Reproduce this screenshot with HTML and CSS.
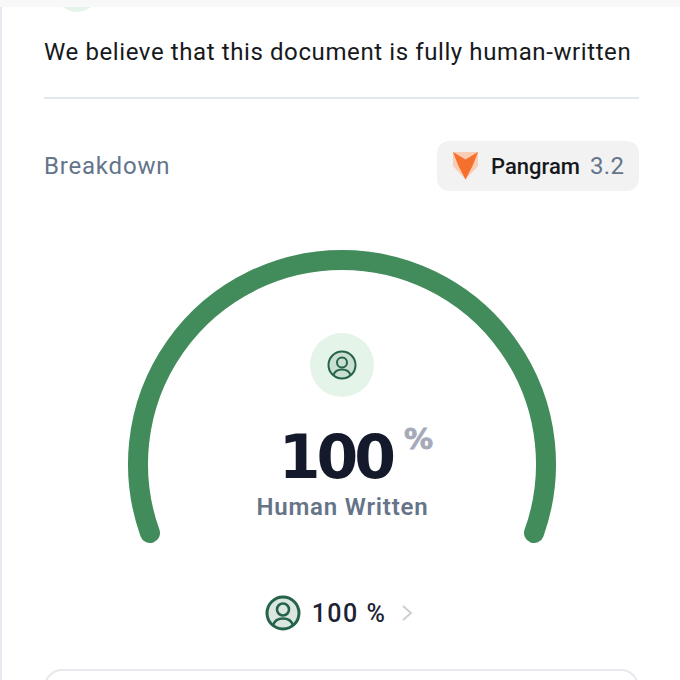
FILE: index.html
```html
<!DOCTYPE html>
<html lang="en">
<head>
    <meta charset="UTF-8">
    <title>Breakdown</title>
    <link rel="stylesheet" href="styles.css">
</head>
<body>
    <div class="topbar"></div>

    <main class="card">
        <div class="peek"><div class="peek-circle"></div></div>

        <p class="verdict">We believe that this document is fully human-written</p>

        <div class="breakdown-head">
            <h2>Breakdown</h2>
            <div class="model-chip">
                <svg class="fox" viewBox="0 0 25 28" width="25" height="28">
                    <path d="M0 0 L0 14 L12.5 27.5 L25 14 L25 0 Z" fill="#f9cdb6"/>
                    <path d="M0 0 L12.5 7.5 L25 0 L19.5 14 L12.5 27.5 L5.5 14 Z" fill="#f5702c"/>
                </svg>
                <span class="model-name">Pangram</span>
                <span class="model-version">3.2</span>
            </div>
        </div>

        <div class="gauge">
            <svg class="gauge-arc" viewBox="0 0 440 304" width="440" height="304">
                <path d="M27 285 A204 204 0 1 1 411 285" fill="none" stroke="#428c5c" stroke-width="20" stroke-linecap="round"/>
            </svg>
            <div class="gauge-center">
                <div class="icon-circle">
                    <svg viewBox="0 0 30 30" width="30" height="30">
                        <circle cx="15" cy="15" r="13.5" fill="#c9e0d0" stroke="#24624a" stroke-width="2"/>
                        <circle cx="15" cy="12.5" r="5" fill="none" stroke="#24624a" stroke-width="2"/>
                        <path d="M6.5 25 C8 20.5 11 19.5 15 19.5 C19 19.5 22 20.5 23.5 25" fill="none" stroke="#24624a" stroke-width="2"/>
                    </svg>
                </div>
                <div class="score">100<span class="score-unit">%</span></div>
                <div class="score-label">Human Written</div>
            </div>
        </div>

        <div class="legend">
            <svg viewBox="0 0 36 36" width="36" height="36">
                <circle cx="18" cy="18" r="16" fill="#dbe6e0" stroke="#24624a" stroke-width="3"/>
                <circle cx="18" cy="14.5" r="6" fill="none" stroke="#24624a" stroke-width="2.6"/>
                <path d="M8 30 C10 24.5 13.5 23.5 18 23.5 C22.5 23.5 26 24.5 28 30" fill="none" stroke="#24624a" stroke-width="2.6"/>
            </svg>
            <span class="legend-value">100 %</span>
            <svg class="chevron" viewBox="0 0 12 18" width="12" height="18">
                <path d="M2 2 L10 9 L2 16" fill="none" stroke="#cfcfd2" stroke-width="2"/>
            </svg>
        </div>

        <div class="next-card"></div>
    </main>
</body>
</html>
```

FILE: styles.css
```css
* {
    box-sizing: border-box;
}

html, body {
    height: 100%;
}

body {
    margin: 0;
    background: #fff;
    font-family: Roboto, "Noto Sans", sans-serif;
    overflow: hidden;
}

.topbar {
    height: 7px;
    background: #f8f8f8;
}

.card {
    height: 673px;
    padding: 0 41px 0 44px;
    border-left: 2px solid #e8e8f0;
    overflow: hidden;
}

.peek {
    height: 5px;
    margin-left: 9px;
    overflow: hidden;
}

.peek-circle {
    width: 44px;
    height: 44px;
    margin-top: -39px;
    border-radius: 50%;
    background: #e5f4e8;
}

.verdict {
    margin: 0;
    margin-left: -2px;
    padding-top: 26px;
    padding-bottom: 31px;
    font-size: 24px;
    line-height: 28px;
    letter-spacing: .6px;
    color: #16191c;
    border-bottom: 2px solid #e2e6f0;
}

.breakdown-head {
    display: flex;
    justify-content: space-between;
    align-items: center;
    margin-top: 42px;
    margin-left: -2px;
}

.breakdown-head h2 {
    margin: 0;
    font-size: 24px;
    font-weight: 400;
    letter-spacing: .8px;
    color: #64748b;
}

.model-chip {
    display: flex;
    align-items: center;
    width: 202px;
    height: 50px;
    padding-left: 16px;
    border-radius: 12px;
    background: #f2f2f2;
}

.fox {
    margin-right: 13px;
}

.model-name {
    font-size: 22px;
    font-weight: 500;
    color: #16191c;
    margin-right: 10px;
}

.model-version {
    font-size: 24px;
    letter-spacing: .4px;
    color: #64748b;
}

.gauge {
    display: grid;
    justify-items: center;
    margin-top: 57px;
}

.gauge-arc, .gauge-center {
    grid-area: 1 / 1;
}

.gauge-center {
    display: flex;
    flex-direction: column;
    align-items: center;
    padding-top: 85px;
}

.icon-circle {
    display: flex;
    justify-content: center;
    align-items: center;
    width: 64px;
    height: 64px;
    border-radius: 50%;
    background: #e5f4e8;
}

.score {
    position: relative;
    margin-top: 21px;
    margin-right: 14px;
    font-family: "DejaVu Sans", sans-serif;
    font-size: 60px;
    font-weight: 700;
    letter-spacing: -4px;
    line-height: 78px;
    color: #141a2c;
}

.score-unit {
    position: absolute;
    left: 100%;
    top: 1px;
    margin-left: 12px;
    font-size: 29px;
    font-weight: 700;
    letter-spacing: 0;
    line-height: 40px;
    color: #a6a9b8;
    -webkit-text-stroke: .8px #a6a9b8;
}

.score-label {
    margin-top: -5px;
    font-size: 24px;
    font-weight: 600;
    letter-spacing: .8px;
    line-height: 32px;
    color: #667488;
}

.legend {
    display: flex;
    justify-content: center;
    align-items: center;
    margin-top: 43px;
    padding-right: 7px;
}

.legend-value {
    margin: 0 15px 0 11px;
    font-size: 25px;
    font-weight: 500;
    letter-spacing: 1.5px;
    color: #1c2333;
}

.next-card {
    height: 60px;
    margin-top: 38px;
    margin-left: -2px;
    border: 2px solid #e8e8ef;
    border-radius: 18px;
}
```
